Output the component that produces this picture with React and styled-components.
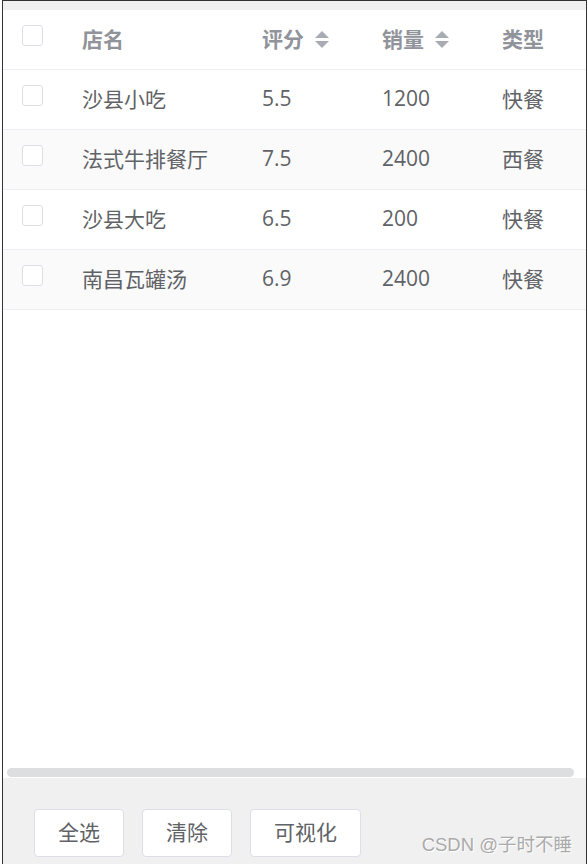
import React from 'react';
import styled, { createGlobalStyle } from 'styled-components';

const GlobalStyle = createGlobalStyle`
	html, body {
		margin: 0;
		padding: 0;
		background: #fff;
	}
	body {
		font-family: "Open Sans", "Noto Sans CJK SC", sans-serif;
	}
`;

const Frame = styled.div`
	position: relative;
	box-sizing: border-box;
	margin-left: 2px;
	height: 864px;
	border-top: 1px solid #333;
	border-left: 1px solid #333;
	border-right: 1px solid #333;
	display: flex;
	flex-direction: column;
	overflow: hidden;
`;

const Page = styled.div`
	flex: 1;
	display: flex;
	flex-direction: column;
	background: #f0f0f0;
	padding-top: 9px;
`;

const TableArea = styled.div`
	flex: 1;
	display: flex;
	flex-direction: column;
	background: #fff;
	overflow: hidden;
`;

const Rows = styled.div`
	flex: 1;
	width: 602px;
`;

const Row = styled.div`
	display: grid;
	grid-template-columns: 59px 180px 120px 120px 123px;
	height: 60px;
	box-sizing: border-box;
	border-bottom: 1px solid #ebeef5;
	background: ${props => props.striped ? '#fafafa' : '#fff'};
	color: ${props => props.head ? '#909399' : '#606266'};
	font-weight: ${props => props.head ? 700 : 400};
	font-size: 21px;
`;

const Cell = styled.div`
	display: flex;
	align-items: center;
	padding: 0 0 3px 20px;
	white-space: nowrap;
`;

const FirstCell = styled(Cell)`
	padding-left: 19px;
`;

const Check = styled.span`
	display: inline-block;
	box-sizing: border-box;
	width: 21px;
	height: 21px;
	border: 1px solid #dcdfe6;
	border-radius: 3px;
	background: #fff;
	margin-bottom: 5px;
`;

const Sort = styled.span`
	display: inline-flex;
	flex-direction: column;
	align-items: center;
	gap: 3px;
	margin-left: 11px;
	margin-top: 2px;
`;

const Caret = styled.span`
	width: 0;
	height: 0;
	border-left: 7px solid transparent;
	border-right: 7px solid transparent;
	${props => props.down
		? 'border-top: 7px solid #a8abb2;'
		: 'border-bottom: 7px solid #a8abb2;'}
`;

const ScrollTrack = styled.div`
	padding: 0 12px 1px 4px;
`;

const ScrollThumb = styled.div`
	height: 9px;
	border-radius: 5px;
	background: #dddee0;
`;

const Footer = styled.div`
	height: 86px;
	box-sizing: border-box;
	background: #f0f0f0;
	display: flex;
	align-items: flex-start;
	gap: 18px;
	padding: 31px 0 0 31px;
`;

const Button = styled.button`
	width: ${props => props.wide ? 111 : 90}px;
	height: 48px;
	padding: 0 0 2px;
	border: 1px solid #dcdfe6;
	border-radius: 4px;
	background: #fff;
	color: #606266;
	font-family: "Open Sans", "Noto Sans CJK SC", sans-serif;
	font-size: 21px;
	line-height: 1;
`;

const Watermark = styled.div`
	position: absolute;
	right: 14px;
	bottom: 8px;
	font-family: "Liberation Sans", "Noto Sans CJK SC", sans-serif;
	font-size: 18.5px;
	color: #aaaaaa;
	text-shadow: 1px 1px 0 #fff;
`;

const shops = [
	{ name: '沙县小吃', score: '5.5', sales: '1200', type: '快餐' },
	{ name: '法式牛排餐厅', score: '7.5', sales: '2400', type: '西餐' },
	{ name: '沙县大吃', score: '6.5', sales: '200', type: '快餐' },
	{ name: '南昌瓦罐汤', score: '6.9', sales: '2400', type: '快餐' },
];

const SortIcon = () => (
	<Sort>
		<Caret />
		<Caret down />
	</Sort>
);

export default function App() {
	return (
		<>
			<GlobalStyle />
			<Frame>
				<Page>
					<TableArea>
						<Rows>
							<Row head>
								<FirstCell><Check /></FirstCell>
								<Cell>店名</Cell>
								<Cell>评分<SortIcon /></Cell>
								<Cell>销量<SortIcon /></Cell>
								<Cell>类型</Cell>
							</Row>
							{shops.map((s, i) => (
								<Row key={s.name} striped={i % 2 === 1}>
									<FirstCell><Check /></FirstCell>
									<Cell>{s.name}</Cell>
									<Cell>{s.score}</Cell>
									<Cell>{s.sales}</Cell>
									<Cell>{s.type}</Cell>
								</Row>
							))}
						</Rows>
						<ScrollTrack>
							<ScrollThumb />
						</ScrollTrack>
					</TableArea>
					<Footer>
						<Button>全选</Button>
						<Button>清除</Button>
						<Button wide>可视化</Button>
					</Footer>
				</Page>
				<Watermark>CSDN @子时不睡</Watermark>
			</Frame>
		</>
	);
}
